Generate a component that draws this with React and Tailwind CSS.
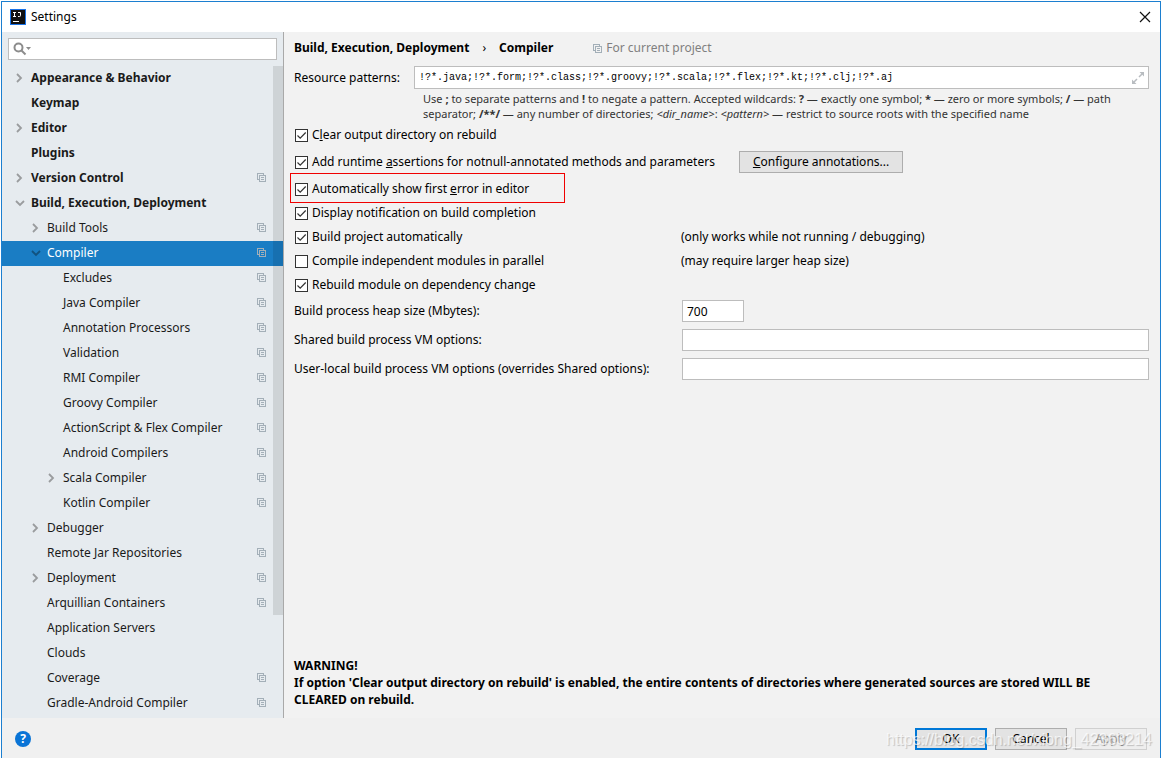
import React from 'react';

const tree = [
  { t: 'Appearance & Behavior', l: 0, a: 'r' },
  { t: 'Keymap', l: 0 },
  { t: 'Editor', l: 0, a: 'r' },
  { t: 'Plugins', l: 0 },
  { t: 'Version Control', l: 0, a: 'r', c: true },
  { t: 'Build, Execution, Deployment', l: 0, a: 'd' },
  { t: 'Build Tools', l: 1, a: 'r', c: true },
  { t: 'Compiler', l: 1, a: 'd', c: true, sel: true },
  { t: 'Excludes', l: 2, c: true },
  { t: 'Java Compiler', l: 2, c: true },
  { t: 'Annotation Processors', l: 2, c: true },
  { t: 'Validation', l: 2, c: true },
  { t: 'RMI Compiler', l: 2, c: true },
  { t: 'Groovy Compiler', l: 2, c: true },
  { t: 'ActionScript & Flex Compiler', l: 2, c: true },
  { t: 'Android Compilers', l: 2, c: true },
  { t: 'Scala Compiler', l: 2, a: 'r', c: true },
  { t: 'Kotlin Compiler', l: 2, c: true },
  { t: 'Debugger', l: 1, a: 'r' },
  { t: 'Remote Jar Repositories', l: 1, c: true },
  { t: 'Deployment', l: 1, a: 'r', c: true },
  { t: 'Arquillian Containers', l: 1, c: true },
  { t: 'Application Servers', l: 1 },
  { t: 'Clouds', l: 1 },
  { t: 'Coverage', l: 1, c: true },
  { t: 'Gradle-Android Compiler', l: 1, c: true },
];

const indent = ['pl-3', 'pl-7', 'pl-11'];

function Arrow({ dir, selected }) {
  return (
    <svg viewBox="0 0 12 12" className="size-3 shrink-0" fill="none" stroke={selected ? '#12527f' : '#9a9c9e'} strokeWidth="1.8" aria-hidden="true">
      {dir === 'r' && <path d="M3 2l4 4-4 4" />}
      {dir === 'd' && <path d="M2 4l4 4 4-4" />}
    </svg>
  );
}

function CopyIcon() {
  return (
    <svg viewBox="0 0 9 9" className="size-[9px] shrink-0" fill="none" stroke="#a3afb8" shapeRendering="crispEdges" aria-hidden="true">
      <path d="M2 6.5H.5v-6h6V2M2.5 2.5h6v6h-6zM4 4.5h3M4 6.5h3" />
    </svg>
  );
}

function Check({ checked, children }) {
  return (
    <label className="flex items-center gap-1 pl-px">
      <span className="grid shrink-0">
        <input type="checkbox" defaultChecked={checked} className="peer col-start-1 row-start-1 size-[13px] appearance-none border border-[#333] bg-white" />
        <svg viewBox="0 0 13 13" className="pointer-events-none invisible col-start-1 row-start-1 size-[13px] peer-checked:visible" fill="none" stroke="#333" strokeWidth="1.2" aria-hidden="true">
          <path d="M2.5 6.5l2.7 2.7L10.700 3.500" />
        </svg>
      </span>
      <span className="whitespace-nowrap">{children}</span>
    </label>
  );
}

const field = 'h-[22px] border border-[#bdbdbd] bg-white px-1 outline-none';

export default function App() {
  return (
    <div className="flex min-h-screen flex-col bg-white px-px pt-px font-['Noto_Sans','Open_Sans',sans-serif] text-xs leading-4 text-black">
      <div className="flex grow flex-col border-x border-t border-[#1c7fd0] bg-[#f0f0f0]">
        <header className="flex h-[30px] items-center gap-[5px] bg-white pr-[7px] pl-2">
          <svg viewBox="0 0 16 16" className="size-4" aria-hidden="true">
            <rect width="16" height="16" fill="#1a73e8" />
            <rect x="1" y="1" width="14" height="14" fill="#111" />
            <path d="M3 3.500h3M4.500 3.500v4M3 7.500h3M8 3.500h2.500v3q0 1-1 1H8M3 12.500h6" fill="none" stroke="#fff" />
          </svg>
          <h1 className="grow">Settings</h1>
          <button aria-label="Close" className="p-0.5">
            <svg viewBox="0 0 12 12" className="size-3" fill="none" stroke="#111" strokeWidth="1.2" aria-hidden="true"><path d="M1 1l10 10M11 1L1 11" /></svg>
          </button>
        </header>
        <div className="flex grow">
          <aside className="flex w-[282px] shrink-0 flex-col border-r border-[#a9a9a9] bg-[#e6ebef]">
            <label className="mx-1.5 mt-1.5 flex h-[22px] items-center border border-[#bdbdbd] bg-white pl-1">
              <svg viewBox="0 0 20 14" className="h-3.5 w-5 shrink-0" fill="none" stroke="#8c8c8c" strokeWidth="2" aria-hidden="true">
                <circle cx="5.500" cy="5.500" r="4" /><path d="M8.500 8.500l4 4" /><path d="M13 5h5l-2.500 3z" fill="#8c8c8c" stroke="none" />
              </svg>
              <input type="search" aria-label="Search settings" className="w-full min-w-0 outline-none" />
            </label>
            <div className="relative mt-1.5">
              <nav aria-label="Settings categories">
                {tree.map((n) => (
                  <a key={n.t} href="#" className={'flex h-[25px] items-center gap-[5px] pr-[17px] pb-0.5 ' + indent[n.l] + (n.sel ? ' bg-[#1a7dc4] text-white' : ' text-[#1a1a1a]') + (n.l === 0 ? ' font-bold' : '')}>
                    <Arrow dir={n.a} selected={n.sel} />
                    <span className="grow whitespace-nowrap">{n.t}</span>
                    {n.c && <CopyIcon />}
                  </a>
                ))}
              </nav>
              <div className="absolute top-0 right-0 h-[549px] w-2.5 bg-black/10" />
            </div>
          </aside>
          <main className="flex min-w-0 grow flex-col bg-[#f2f2f2] pr-[11px] pl-2.5">
            <div className="mt-2 flex h-4 items-center">
              <h2 className="flex gap-[13px] font-bold"><span>Build, Execution, Deployment</span><span className="font-normal">›</span><span>Compiler</span></h2>
              <span className="ml-10 flex items-center gap-1 text-[#808080]"><CopyIcon />For current project</span>
            </div>
            <div className="mt-2.5 flex items-center gap-[14px]">
              <label htmlFor="patterns">Resource patterns:</label>
              <div className="flex h-[23px] grow items-center border border-[#bdbdbd] bg-white pr-1 pl-1">
                <input id="patterns" defaultValue="!?*.java;!?*.form;!?*.class;!?*.groovy;!?*.scala;!?*.flex;!?*.kt;!?*.clj;!?*.aj" className="min-w-0 grow font-['Liberation_Mono',monospace] text-[10px] outline-none" />
                <svg viewBox="0 0 12 12" className="size-3" fill="#b8bcc0" stroke="#b8bcc0" strokeWidth="1.500" aria-hidden="true"><path d="M7 5l3-3M5 7l-3 3" /><path d="M7.500 0H12v4.500zM0 7.500V12h4.500z" stroke="none" /></svg>
              </div>
            </div>
            <p className="mt-0.5 pr-4 pl-[129px] text-[11px] leading-[15px] text-[#333]">
              Use <b>;</b> to separate patterns and <b>!</b> to negate a pattern. Accepted wildcards: <b>?</b> — exactly one symbol; <b>*</b> — zero or more symbols; <b>/</b> — path separator; <b>/**/</b> — any number of directories; <i>&lt;dir_name&gt;</i>: <i>&lt;pattern&gt;</i> — restrict to source roots with the specified name
            </p>
            <div className="mt-1.5"><Check checked>C<u>l</u>ear output directory on rebuild</Check></div>
            <div className="mt-2 flex items-center gap-6">
              <Check checked>Add runtime <u>a</u>ssertions for notnull-annotated methods and parameters</Check>
              <button className="h-[22px] border border-[#adadad] bg-[#e3e3e3] px-[13px]"><u>C</u>onfigure annotations...</button>
            </div>
            <div className="relative mt-1 grid auto-rows-[24px] grid-cols-[387px_1fr] items-center">
              <div className="pointer-events-none absolute -top-1 -left-1 h-[30px] w-[275px] border border-[#f00000]" />
              <Check checked>Automatically show first <u>e</u>rror in editor</Check><span />
              <Check checked>Display notification on build completion</Check><span />
              <Check checked>Build project automatically</Check><span>(only works while not running / debugging)</span>
              <Check>Compile independent modules in parallel</Check><span>(may require larger heap size)</span>
              <Check checked>Rebuild module on dependency change</Check><span />
            </div>
            <div className="mt-[3px] grid grid-cols-[388px_1fr] items-center gap-y-[7px]">
              <label htmlFor="heap">Build process heap size (Mbytes):</label>
              <input id="heap" defaultValue="700" className={field + ' w-[62px]'} />
              <label htmlFor="shared">Shared build process VM options:</label>
              <input id="shared" className={field} />
              <label htmlFor="local" className="whitespace-nowrap">User-local build process VM options (overrides Shared options):</label>
              <input id="local" className={field} />
            </div>
            <p className="mt-auto pb-2.5 pr-4 leading-[17px] font-bold">WARNING!<br />If option 'Clear output directory on rebuild' is enabled, the entire contents of directories where generated sources are stored WILL BE CLEARED on rebuild.</p>
          </main>
        </div>
        <footer className="relative flex h-10 items-center gap-2 pt-0.5 pr-[13px] pl-3">
          <button aria-label="Help" className="mr-auto ml-px size-4 rounded-full bg-[#0a74d6] text-xs leading-4 font-bold text-white">?</button>
          <button className="h-[22px] w-[72px] border-2 border-[#0078d7] bg-[#e3e3e3]">OK</button>
          <button className="h-[22px] w-[72px] border border-[#adadad] bg-[#e3e3e3]">Cancel</button>
          <button disabled className="h-[22px] w-[72px] border border-[#d0d0d0] bg-[#eee] text-[#a0a0a0]">Apply</button>
          <span className="pointer-events-none absolute top-3 right-2 font-['Liberation_Sans',sans-serif] text-base leading-5 text-white/70 [text-shadow:1px_1px_1px_rgba(0,0,0,0.2)]">https://blog.csdn.net/xiong_42363214</span>
        </footer>
      </div>
    </div>
  );
}
